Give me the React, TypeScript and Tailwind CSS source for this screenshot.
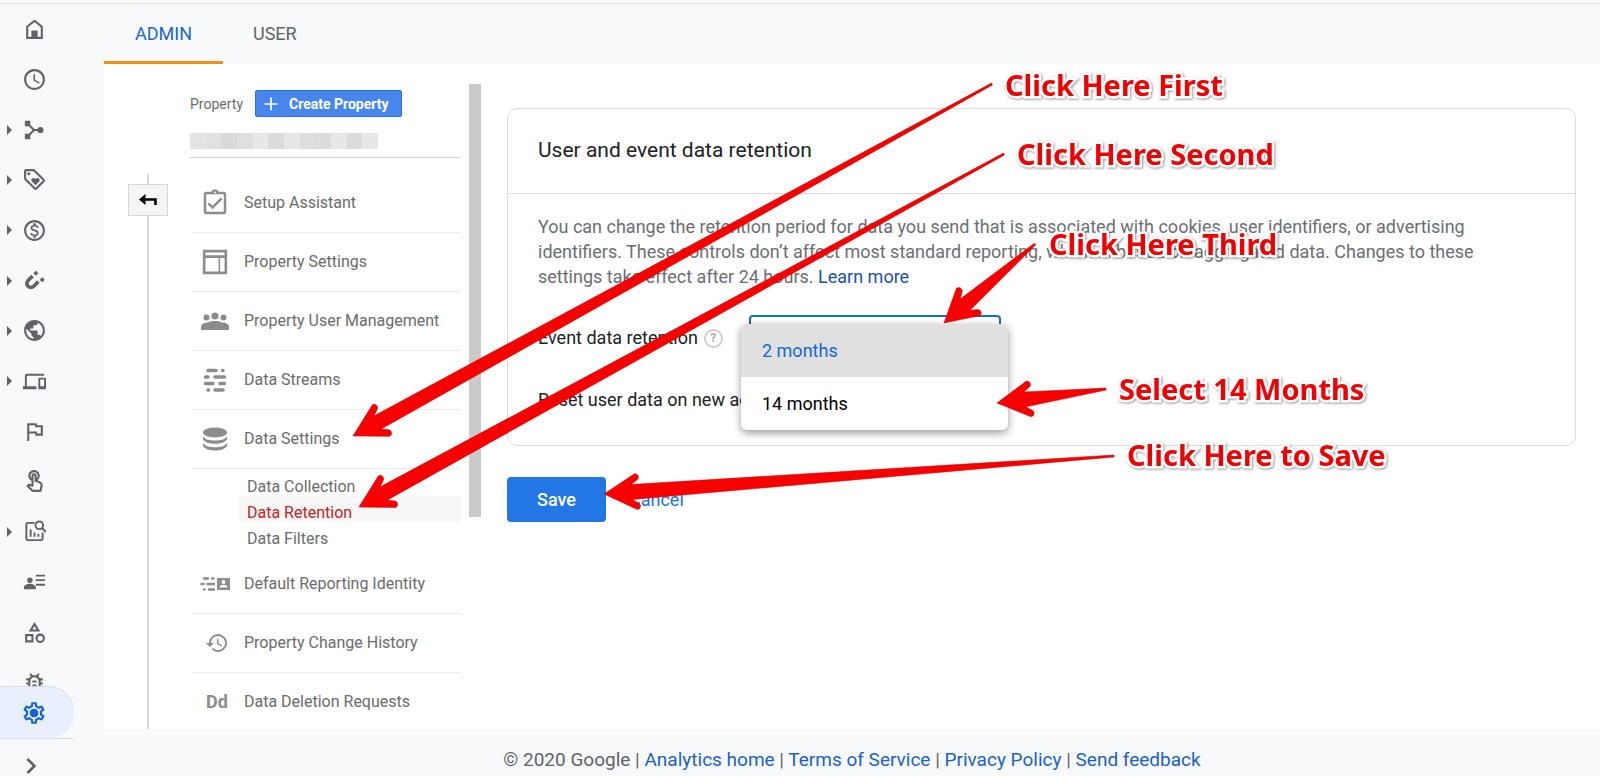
import type { ReactNode } from "react";
import { Plus } from "lucide-react";
import {
  MdAccessTime,
  MdChevronRight,
  MdDevices,
  MdHistory,
  MdOutlineAssignmentTurnedIn,
  MdOutlineBugReport,
  MdOutlineCategory,
  MdOutlineFlag,
  MdOutlineLoyalty,
  MdOutlineMonetizationOn,
  MdOutlineSettings,
  MdOutlineTouchApp,
  MdPublic,
} from "react-icons/md";

interface RailItem {
  label: string;
  icon: ReactNode;
  expandable?: boolean;
}

interface Arrow {
  tail: [number, number];
  tip: [number, number];
}

function Glyph({ children, className = "size-[25px]" }: { children: ReactNode; className?: string }) {
  return (
    <svg viewBox="0 0 24 24" fill="currentColor" className={className} aria-hidden="true">
      {children}
    </svg>
  );
}

const railItems: RailItem[] = [
  {
    label: "Home",
    icon: (
      <Glyph>
        <path d="M5 9.3 12 3.6l7 5.7V20H5Z" fill="none" stroke="currentColor" strokeWidth="2" />
        <path d="M9 13h6v7H9z" />
      </Glyph>
    ),
  },
  { label: "Realtime", icon: <MdAccessTime className="size-[25px]" /> },
  {
    label: "Life cycle",
    expandable: true,
    icon: (
      <Glyph className="size-[22px]">
        <path d="M2 2h6v6H2zM2 16h6v6H2z" />
        <circle cx="19" cy="12" r="3.4" />
        <path d="m5 5 7 7-7 7M12 12h7" fill="none" stroke="currentColor" strokeWidth="2.200" />
      </Glyph>
    ),
  },
  { label: "Retention", expandable: true, icon: <MdOutlineLoyalty className="size-[25px]" /> },
  { label: "Monetization", expandable: true, icon: <MdOutlineMonetizationOn className="size-[25px]" /> },
  {
    label: "Acquisition",
    expandable: true,
    icon: (
      <Glyph className="size-[22px]">
        <path
          d="m10.500 6.500-5 5a4.400 4.400 0 0 0 0 6.200 4.400 4.400 0 0 0 6.200 0l5-5"
          fill="none"
          stroke="currentColor"
          strokeWidth="4"
        />
        <path d="m14 .8 2.800 2.800-2.800 2.800-2.800-2.800zM21 7.800l2.800 2.800-2.800 2.800-2.800-2.800z" />
      </Glyph>
    ),
  },
  { label: "Demographics", expandable: true, icon: <MdPublic className="size-[25px]" /> },
  { label: "Tech", expandable: true, icon: <MdDevices className="size-[23px]" /> },
  { label: "Conversions", icon: <MdOutlineFlag className="size-[25px]" /> },
  { label: "Events", icon: <MdOutlineTouchApp className="size-[25px]" /> },
  {
    label: "Analysis",
    expandable: true,
    icon: (
      <Glyph className="size-[23px]">
        <path
          d="M12 3H5a1.500 1.500 0 0 0-1.500 1.500v15A1.500 1.500 0 0 0 5 21h14a1.500 1.500 0 0 0 1.500-1.500V13M8 10v7.500M12 13v4.500M16 14.500v3"
          fill="none"
          stroke="currentColor"
          strokeWidth="2"
        />
        <circle cx="17" cy="5.500" r="4" fill="none" stroke="currentColor" strokeWidth="2" />
        <path d="m20 8.500 4 4" stroke="currentColor" strokeWidth="2.200" />
      </Glyph>
    ),
  },
  {
    label: "Audiences",
    icon: (
      <Glyph className="size-[22px]">
        <circle cx="7.500" cy="10" r="3" />
        <path d="M1 20v-2c0-2.600 4-4 6.500-4s6.500 1.400 6.500 4v2zM14 4h10v2H14zM14 9h10v2H14zM14 14h10v2H14z" />
      </Glyph>
    ),
  },
  { label: "Custom definitions", icon: <MdOutlineCategory className="size-[25px]" /> },
  { label: "DebugView", icon: <MdOutlineBugReport className="size-[25px]" /> },
];

const propertyItems: RailItem[] = [
  { label: "Setup Assistant", icon: <MdOutlineAssignmentTurnedIn className="size-[30px]" /> },
  {
    label: "Property Settings",
    icon: (
      <Glyph className="size-[26px]">
        <path d="M2 2h20v20H2zM2 7h20" fill="none" stroke="currentColor" strokeWidth="2.400" />
        <path d="M16 7v15" stroke="currentColor" strokeWidth="1.400" />
      </Glyph>
    ),
  },
  {
    label: "Property User Management",
    icon: (
      <svg viewBox="0 0 28 20" fill="currentColor" className="h-5 w-7" aria-hidden="true">
        <circle cx="14" cy="5" r="3.600" />
        <circle cx="5.500" cy="6.500" r="3" />
        <circle cx="22.500" cy="6.500" r="3" />
        <path d="M0 19v-3.500C0 13 4 11.500 7 11.500c2-1.200 4.500-1.500 7-1.500s5 .3 7 1.500c3 0 7 1.500 7 4V19z" />
      </svg>
    ),
  },
  {
    label: "Data Streams",
    icon: (
      <Glyph className="size-6">
        <path
          d="M5 2.500h8M19.500 2.500h.5M2.500 9H5M12 9h9.500M2.500 15.500H10M17 15.500h4.500M5 22h.5M12 22h8"
          stroke="currentColor"
          strokeWidth="3.400"
          strokeLinecap="round"
        />
      </Glyph>
    ),
  },
  {
    label: "Data Settings",
    icon: (
      <Glyph className="size-6">
        <ellipse cx="12" cy="5.500" rx="12" ry="5" />
        <path d="M0 9.500c2.500 3.200 7 4 12 4s9.500-.8 12-4v2.700c-1.500 3.200-7 4.500-12 4.500S1.500 15.400 0 12.200zM0 16.200c2.500 3.200 7 4 12 4s9.500-.8 12-4v2.700c-1.500 3.200-7 4.500-12 4.500S1.500 22.100 0 18.900z" />
      </Glyph>
    ),
  },
];

const dataSettings = ["Data Collection", "Data Retention", "Data Filters"];

const moreItems: RailItem[] = [
  {
    label: "Default Reporting Identity",
    icon: (
      <svg viewBox="0 0 30 14" fill="currentColor" className="h-[14px] w-[30px]" aria-hidden="true">
        <path
          d="M4 1.500h4M12 1.500h1.500M1.500 7h2M7.500 7H14M4 12.500h.5M9 12.500h5"
          stroke="currentColor"
          strokeWidth="2.400"
          strokeLinecap="round"
        />
        <path d="M17 1h13v12H17z" />
        <circle cx="23.500" cy="5" r="1.900" fill="white" />
        <path d="M19.500 10.500c0-3.600 8-3.600 8 0z" fill="white" />
      </svg>
    ),
  },
  { label: "Property Change History", icon: <MdHistory className="ml-1 size-6" /> },
  { label: "Data Deletion Requests", icon: <span className="ml-1 text-lg font-bold">Dd</span> },
];

const mosaic = [
  "bg-[#e3e3e3]",
  "bg-[#e1e1e1]",
  "bg-[#d9d9d9]",
  "bg-[#dfdfdf]",
  "bg-[#e7e7e7]",
  "bg-[#dcdcdc]",
  "bg-[#e6e6e6]",
  "bg-[#dedede]",
  "bg-[#dcdcdc]",
  "bg-[#e7e7e7]",
  "bg-[#dcdcdc]",
  "bg-[#e7e7e7]",
];

const footerLinks = ["Analytics home", "Terms of Service", "Privacy Policy", "Send feedback"];

const arrows: Arrow[] = [
  { tail: [992, 84], tip: [353, 436] },
  { tail: [1004, 154], tip: [359, 507] },
  { tail: [1035, 244], tip: [944, 323] },
  { tail: [1106, 389], tip: [997, 403] },
  { tail: [1114, 456], tip: [604, 494] },
];

const notes = [
  { text: "Click Here First", place: "left-[1005px] top-[65px]" },
  { text: "Click Here Second", place: "left-[1017px] top-[134px]" },
  { text: "Click Here Third", place: "left-[1049px] top-[224px]" },
  { text: "Select 14 Months", place: "left-[1119px] top-[369px]" },
  { text: "Click Here to Save", place: "left-[1127px] top-[435px]" },
];

function Rail() {
  return (
    <nav className="flex w-[104px] shrink-0 flex-col text-[#5f6368]">
      <div className="min-h-0 flex-1 overflow-hidden">
        <ul className="grid h-[704px] auto-rows-fr">
          {railItems.map((item) => (
            <li key={item.label} className="flex">
              <button type="button" aria-label={item.label} className="flex items-center">
                <span className="flex w-[21px] pl-[7px]">
                  {item.expandable && (
                    <svg viewBox="0 0 5 10" fill="currentColor" className="h-[10px] w-[5px]" aria-hidden="true">
                      <path d="M0 0l5 5-5 5z" />
                    </svg>
                  )}
                </span>
                <span className="flex w-[26px] justify-center">{item.icon}</span>
              </button>
            </li>
          ))}
        </ul>
      </div>
      <button
        type="button"
        aria-label="Admin"
        className="flex h-[51px] w-[74px] shrink-0 items-center rounded-r-full bg-[#e8f0fe] pl-[21px] text-[#1a62d0] shadow-[0_-1px_1px_#d8dade]"
      >
        <span className="relative">
          <MdOutlineSettings className="size-[26px]" />
          <span className="absolute inset-[9px] rounded-full bg-[#1a62d0]" />
        </span>
      </button>
      <div className="flex h-[38px] w-[74px] shrink-0 items-end overflow-hidden border-t border-[#dadce0] pl-[15px]">
        <button type="button" aria-label="Expand navigation" className="-mb-[6px]">
          <MdChevronRight className="size-8" />
        </button>
      </div>
    </nav>
  );
}

function PropertyRow({ item, last }: { item: RailItem; last?: boolean }) {
  return (
    <li className={last ? "" : "border-b border-[#ebebeb]"}>
      <a href="#" className="flex h-[58px] items-center">
        <span className="flex w-[46px] shrink-0 justify-center text-[#8c8c8c]">{item.icon}</span>
        <span className="pl-[6px] whitespace-nowrap">{item.label}</span>
      </a>
    </li>
  );
}

function PropertyColumn() {
  return (
    <div className="flex shrink-0 pl-6">
      <div className="flex w-10 flex-col items-center pt-[110px]">
        <span className="h-[10px] w-[2px] bg-[#d9d9d9]" />
        <button
          type="button"
          aria-label="Back"
          className="flex h-8 w-10 items-center justify-center border border-[#d8d8d8] bg-[#f5f5f5] text-black"
        >
          <svg viewBox="0 0 18 12" className="h-3 w-[18px]" aria-hidden="true">
            <path d="M0 5.500 6.500 0v11z" />
            <path d="M5 5.500h11.500V11" fill="none" stroke="currentColor" strokeWidth="2.600" />
          </svg>
        </button>
        <span className="w-[2px] flex-1 bg-[#d9d9d9]" />
      </div>

      <div className="w-[293px] pl-[22px] text-[#6b6b6b]">
        <div className="flex items-center gap-3 pt-[26px] text-sm">
          <span>Property</span>
          <button
            type="button"
            className="flex h-[27px] items-center gap-2 rounded-xs border border-[#2f6fdc] bg-[#4787ed] pr-3 pl-[5px] font-bold text-white"
          >
            <Plus className="size-5" strokeWidth={2} />
            Create Property
          </button>
        </div>
        <div className="mt-4 flex h-4 w-[188px]">
          {mosaic.map((shade, i) => (
            <span key={i} className={`flex-1 ${shade}`} />
          ))}
        </div>
        <div className="mt-2 border-b border-[#d4d4d4]" />

        <ul className="mt-4 pl-[2px] text-base">
          {propertyItems.map((item) => (
            <PropertyRow key={item.label} item={item} />
          ))}
        </ul>
        <ul className="pt-px pb-[7px] pl-[49px] text-base leading-[34px]">
          {dataSettings.map((name) => (
            <li
              key={name}
              className={name === "Data Retention" ? "h-[26px] bg-[#f7f7f7] pl-2 text-[#c5221f]" : "h-[26px] pl-2"}
            >
              <a href="#">{name}</a>
            </li>
          ))}
        </ul>
        <ul className="pl-[2px] text-base">
          {moreItems.map((item, i) => (
            <PropertyRow key={item.label} item={item} last={i === moreItems.length - 1} />
          ))}
        </ul>
      </div>
      <div className="mt-5 ml-2 h-[433px] w-3 bg-[#cacaca]" />
    </div>
  );
}

function RetentionForm() {
  return (
    <form className="min-w-0 flex-1 pt-11 pr-6 pl-[26px]" onSubmit={(e) => e.preventDefault()}>
      <section className="rounded-[10px] border border-[#dadce0] pb-[22px] text-lg">
        <h1 className="border-b border-[#dadce0] px-[30px] pt-[26px] pb-[27px] text-[21px] leading-[31px] text-[#202124]">
          User and event data retention
        </h1>
        <p className="max-w-[1020px] px-[30px] pt-5 leading-[25px] text-[#6b6e72]">
          You can change the retention period for data you send that is associated with cookies, user identifiers, or
          advertising identifiers. These controls don’t affect most standard reporting, which is based on aggregated
          data. Changes to these settings take effect after 24 hours.{" "}
          <a href="#" className="text-[#1a4fb8]">
            Learn more
          </a>
        </p>
        <div className="mt-[26px] flex h-[46px] items-center pl-[30px] text-[#202124]">
          <div className="flex w-[211px] shrink-0 items-center gap-[6px] whitespace-nowrap">
            <label htmlFor="retention">Event data retention</label>
            <button
              type="button"
              aria-label="Help"
              className="flex size-[19px] items-center justify-center rounded-full border-2 border-[#d0d0d0] text-xs font-bold text-[#a8a8a8]"
            >
              ?
            </button>
          </div>
          <div className="relative">
            <select
              id="retention"
              defaultValue="2 months"
              className="h-[46px] w-[252px] appearance-none rounded-sm border-2 border-[#1a6ad4] bg-white px-3"
            >
              <option>2 months</option>
              <option>14 months</option>
            </select>
            <div className="absolute top-[9px] -left-2 z-10 w-[267px] overflow-hidden rounded-md bg-white shadow-[0_3px_8px_rgba(0,0,0,0.4)]">
              <button type="button" className="block h-[53px] w-full bg-[#e0e0e0] px-[21px] text-left text-[#1967d2]">
                2 months
              </button>
              <button type="button" className="block h-[53px] w-full px-[21px] text-left text-black">
                14 months
              </button>
            </div>
          </div>
        </div>
        <div className="mt-4 flex h-[46px] items-center pl-[30px] text-[#202124]">
          <label htmlFor="reset" className="w-[270px] shrink-0 whitespace-nowrap">
            Reset user data on new activity
          </label>
          <input id="reset" type="checkbox" defaultChecked className="size-4" />
        </div>
      </section>
      <div className="mt-[31px] flex text-lg">
        <button type="submit" className="h-[45px] w-[99px] rounded-sm bg-[#2376e5] font-medium text-white">
          Save
        </button>
        <button type="button" className="px-[23px] text-[#1a73e8]">
          Cancel
        </button>
      </div>
    </form>
  );
}

// Arrow outline in its own space: the tip at the origin, the shaft running along +x
function arrowPath(length: number) {
  return `M0 0L32 18A3.500 3.500 0 0 0 34.500 12L28 7.500L${length} 1V-1L28 -7.500L34.500 -12A3.500 3.500 0 0 0 32 -18Z`;
}

function Annotations() {
  return (
    <div className="pointer-events-none absolute inset-0 z-20 overflow-hidden">
      <svg className="h-full w-full" fill="#f60000" stroke="#c40000" strokeWidth="0.500" aria-hidden="true">
        {arrows.map(({ tail, tip }) => {
          const dx = tail[0] - tip[0];
          const dy = tail[1] - tip[1];
          const angle = (Math.atan2(dy, dx) * 180) / Math.PI;
          return (
            <path
              key={tip.join()}
              d={arrowPath(Math.hypot(dx, dy))}
              transform={`translate(${tip[0]} ${tip[1]}) rotate(${angle})`}
            />
          );
        })}
      </svg>
      {notes.map((note) => (
        <p
          key={note.text}
          className={`absolute font-['Noto_Sans'] text-[29px] leading-10 font-bold whitespace-nowrap text-[#f00000] drop-shadow-[1px_1px_1px_rgba(0,0,0,0.4)] [-webkit-text-stroke:5px_white] [paint-order:stroke_fill] ${note.place}`}
        >
          {note.text}
        </p>
      ))}
    </div>
  );
}

export default function App() {
  return (
    <div className="relative flex h-screen flex-col overflow-hidden bg-[#f8f9fb] font-[Roboto,sans-serif]">
      <div className="h-1 shrink-0 border-b border-[#dadce0]" />
      <div className="flex min-h-0 flex-1">
        <Rail />
        <div className="flex min-w-0 flex-1 flex-col">
          <header className="flex h-[60px] shrink-0 text-lg">
            <a
              href="#"
              className="flex w-[119px] items-center justify-center border-b-3 border-[#f29111] pt-[3px] text-[#1967d2]"
            >
              ADMIN
            </a>
            <a href="#" className="flex items-center border-b-3 border-transparent px-[30px] pt-[3px] text-[#5f6368]">
              USER
            </a>
          </header>
          <main className="flex min-h-0 flex-1 overflow-hidden bg-white">
            <PropertyColumn />
            <RetentionForm />
          </main>
          <footer className="h-[47px] shrink-0 pt-[19px] text-center text-[19px] leading-6 text-[#5f6368]">
            © 2020 Google
            {footerLinks.map((name) => (
              <span key={name}>
                {" | "}
                <a href="#" className="text-[#1a62c8]">
                  {name}
                </a>
              </span>
            ))}
          </footer>
        </div>
      </div>
      <Annotations />
    </div>
  );
}
